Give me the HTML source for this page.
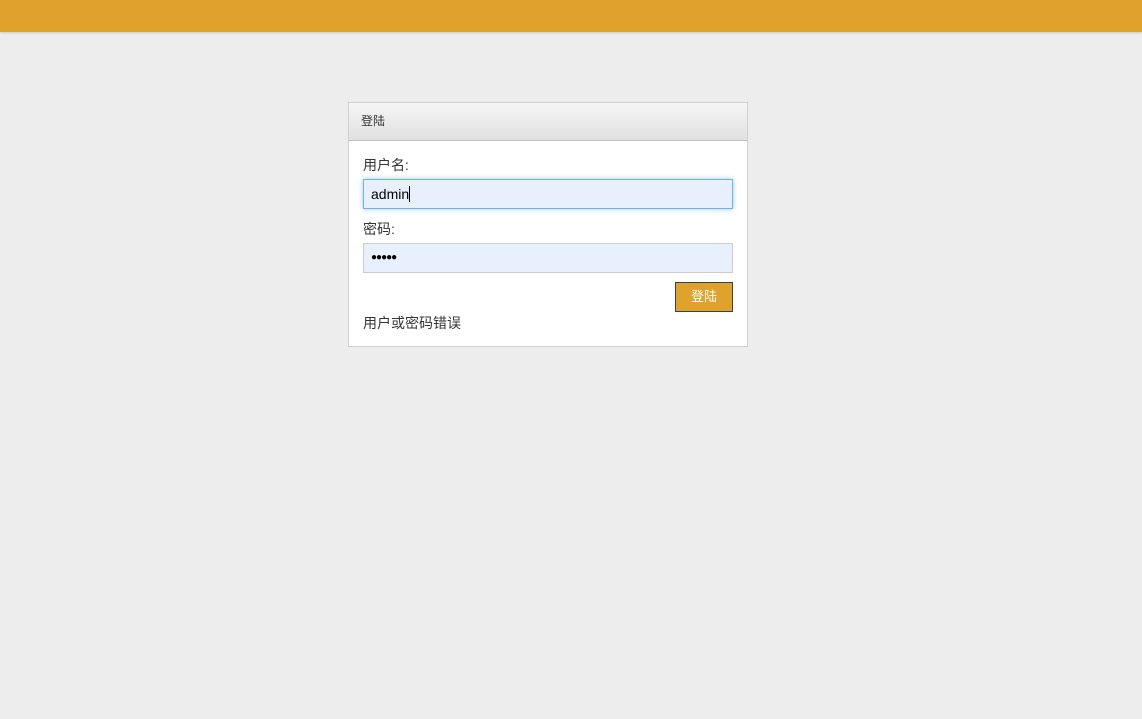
<!DOCTYPE html>
<html><head><meta charset="utf-8"><style>
*{box-sizing:border-box;margin:0;padding:0}
body{width:1142px;height:719px;background:#ededed;font-family:"Liberation Sans","Noto Sans CJK SC",sans-serif;font-size:13px;color:#333;position:relative;overflow:hidden}
.top{position:absolute;left:0;top:0;width:1142px;height:32px;background:#dfa22c;box-shadow:0 1px 2px rgba(0,0,0,.15)}
.panel{position:absolute;left:348px;top:102px;width:400px;height:245px;background:#fff;border:1px solid #d0d0d0}
.hd{height:38px;background:linear-gradient(#f6f6f6,#e0e0e0);border-bottom:1px solid #c0c0c0;padding:0 12px;line-height:36px;font-size:12px;color:#333}
.lbl{position:absolute;left:14px;font-size:14px;line-height:16px}
.inp{position:absolute;left:14px;width:370px;height:30px;background:#e8f0fe;border:1px solid #ccc;padding-left:7px;line-height:28px;font-size:14px;color:#000}
.focus{border-color:#6ab3ee;box-shadow:0 0 5px rgba(100,170,240,.6)}
.btn{position:absolute;left:326px;top:179px;width:58px;height:30px;background:#dfa22c;border:1px solid #3a3f4a;color:#fff;text-align:center;line-height:28px;font-size:13px}
</style></head><body>
<div class="top"></div>
<div class="panel">
<div class="hd">登陆</div>
<div class="lbl" style="top:54px">用户名:</div>
<div class="inp focus" style="top:76px">admin<span style="display:inline-block;width:1px;height:16px;background:#000;vertical-align:-3px"></span></div>
<div class="lbl" style="top:118px">密码:</div>
<div class="inp" style="top:140px;font-size:10px;letter-spacing:-1px">●●●●●</div>
<div class="btn">登陆</div>
<div class="lbl" style="top:212px">用户或密码错误</div>
</div>
</body></html>
